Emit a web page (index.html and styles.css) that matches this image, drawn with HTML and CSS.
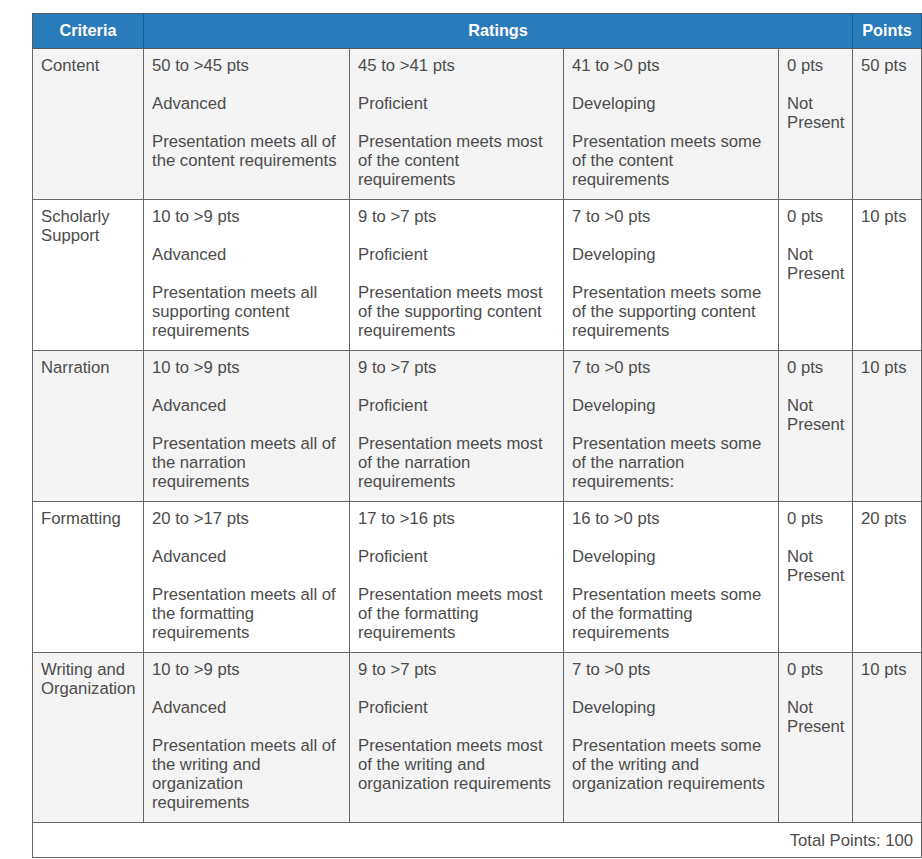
FILE: index.html
```html
<!DOCTYPE html>
<html>
<head>
<meta charset="utf-8">
<link rel="stylesheet" href="styles.css">
</head>
<body>
<div class="wrap">
<table class="rubric">
  <colgroup>
    <col class="c-crit">
    <col class="c-r1">
    <col class="c-r2">
    <col class="c-r3">
    <col class="c-r4">
    <col class="c-pts">
  </colgroup>
  <thead>
    <tr>
      <th>Criteria</th>
      <th colspan="4">Ratings</th>
      <th>Points</th>
    </tr>
  </thead>
  <tbody>
    <tr class="odd">
      <td class="crit">Content</td>
      <td><div class="r">50 to &gt;45 pts</div><div class="r">Advanced</div><div class="d">Presentation meets all of the content requirements</div></td>
      <td><div class="r">45 to &gt;41 pts</div><div class="r">Proficient</div><div class="d">Presentation meets most of the content requirements</div></td>
      <td><div class="r">41 to &gt;0 pts</div><div class="r">Developing</div><div class="d">Presentation meets some of the content requirements</div></td>
      <td><div class="r">0 pts</div><div class="d">Not Present</div></td>
      <td>50 pts</td>
    </tr>
    <tr>
      <td class="crit">Scholarly Support</td>
      <td><div class="r">10 to &gt;9 pts</div><div class="r">Advanced</div><div class="d">Presentation meets all supporting content requirements</div></td>
      <td><div class="r">9 to &gt;7 pts</div><div class="r">Proficient</div><div class="d">Presentation meets most of the supporting content requirements</div></td>
      <td><div class="r">7 to &gt;0 pts</div><div class="r">Developing</div><div class="d">Presentation meets some of the supporting content requirements</div></td>
      <td><div class="r">0 pts</div><div class="d">Not Present</div></td>
      <td>10 pts</td>
    </tr>
    <tr class="odd">
      <td class="crit">Narration</td>
      <td><div class="r">10 to &gt;9 pts</div><div class="r">Advanced</div><div class="d">Presentation meets all of the narration requirements</div></td>
      <td><div class="r">9 to &gt;7 pts</div><div class="r">Proficient</div><div class="d">Presentation meets most of the narration requirements</div></td>
      <td><div class="r">7 to &gt;0 pts</div><div class="r">Developing</div><div class="d">Presentation meets some of the narration requirements:</div></td>
      <td><div class="r">0 pts</div><div class="d">Not Present</div></td>
      <td>10 pts</td>
    </tr>
    <tr>
      <td class="crit">Formatting</td>
      <td><div class="r">20 to &gt;17 pts</div><div class="r">Advanced</div><div class="d">Presentation meets all of the formatting requirements</div></td>
      <td><div class="r">17 to &gt;16 pts</div><div class="r">Proficient</div><div class="d">Presentation meets most of the formatting requirements</div></td>
      <td><div class="r">16 to &gt;0 pts</div><div class="r">Developing</div><div class="d">Presentation meets some of the formatting requirements</div></td>
      <td><div class="r">0 pts</div><div class="d">Not Present</div></td>
      <td>20 pts</td>
    </tr>
    <tr class="odd">
      <td class="crit">Writing and Organization</td>
      <td><div class="r">10 to &gt;9 pts</div><div class="r">Advanced</div><div class="d">Presentation meets all of the writing and organization requirements</div></td>
      <td><div class="r">9 to &gt;7 pts</div><div class="r">Proficient</div><div class="d">Presentation meets most of the writing and organization requirements</div></td>
      <td><div class="r">7 to &gt;0 pts</div><div class="r">Developing</div><div class="d">Presentation meets some of the writing and organization requirements</div></td>
      <td><div class="r">0 pts</div><div class="d">Not Present</div></td>
      <td>10 pts</td>
    </tr>
  </tbody>
  <tfoot>
    <tr>
      <td colspan="6" class="total">Total Points: 100</td>
    </tr>
  </tfoot>
</table>
</div>
</body>
</html>
```

FILE: styles.css
```css
html, body {
  margin: 0;
  padding: 0;
  background: #ffffff;
}

.wrap {
  padding: 13px 0 0 32px;
  width: 900px;
}

.rubric {
  border-collapse: collapse;
  table-layout: fixed;
  width: 889px;
  font-family: "Liberation Sans", Arial, sans-serif;
  font-size: 16.7px;
  line-height: 19px;
  color: #4c4c4c;
}

.c-crit { width: 111px; }
.c-r1 { width: 206px; }
.c-r2 { width: 214px; }
.c-r3 { width: 215px; }
.c-r4 { width: 74px; }
.c-pts { width: 69px; }

.rubric th {
  background: #2a7bb9;
  color: #ffffff;
  font-weight: bold;
  font-size: 16.3px;
  text-align: center;
  padding: 7px 8px 8px;
  border: 1px solid #555a5e;
  border-left-color: #1f5d8a;
  border-right-color: #1f5d8a;
  white-space: nowrap;
}

.rubric th:first-child { border-left-color: #555a5e; }

.rubric td {
  vertical-align: top;
  text-align: left;
  padding: 7px 8px 10px;
  border: 1px solid #666666;
  background: #ffffff;
}

.rubric tr.odd td {
  background: #f4f4f4;
}

.r {
  margin-bottom: 19px;
}

.d {
  margin: 0;
}

.rubric td.total {
  text-align: right;
  padding: 8px 8px 7px;
  background: #ffffff;
}
```
